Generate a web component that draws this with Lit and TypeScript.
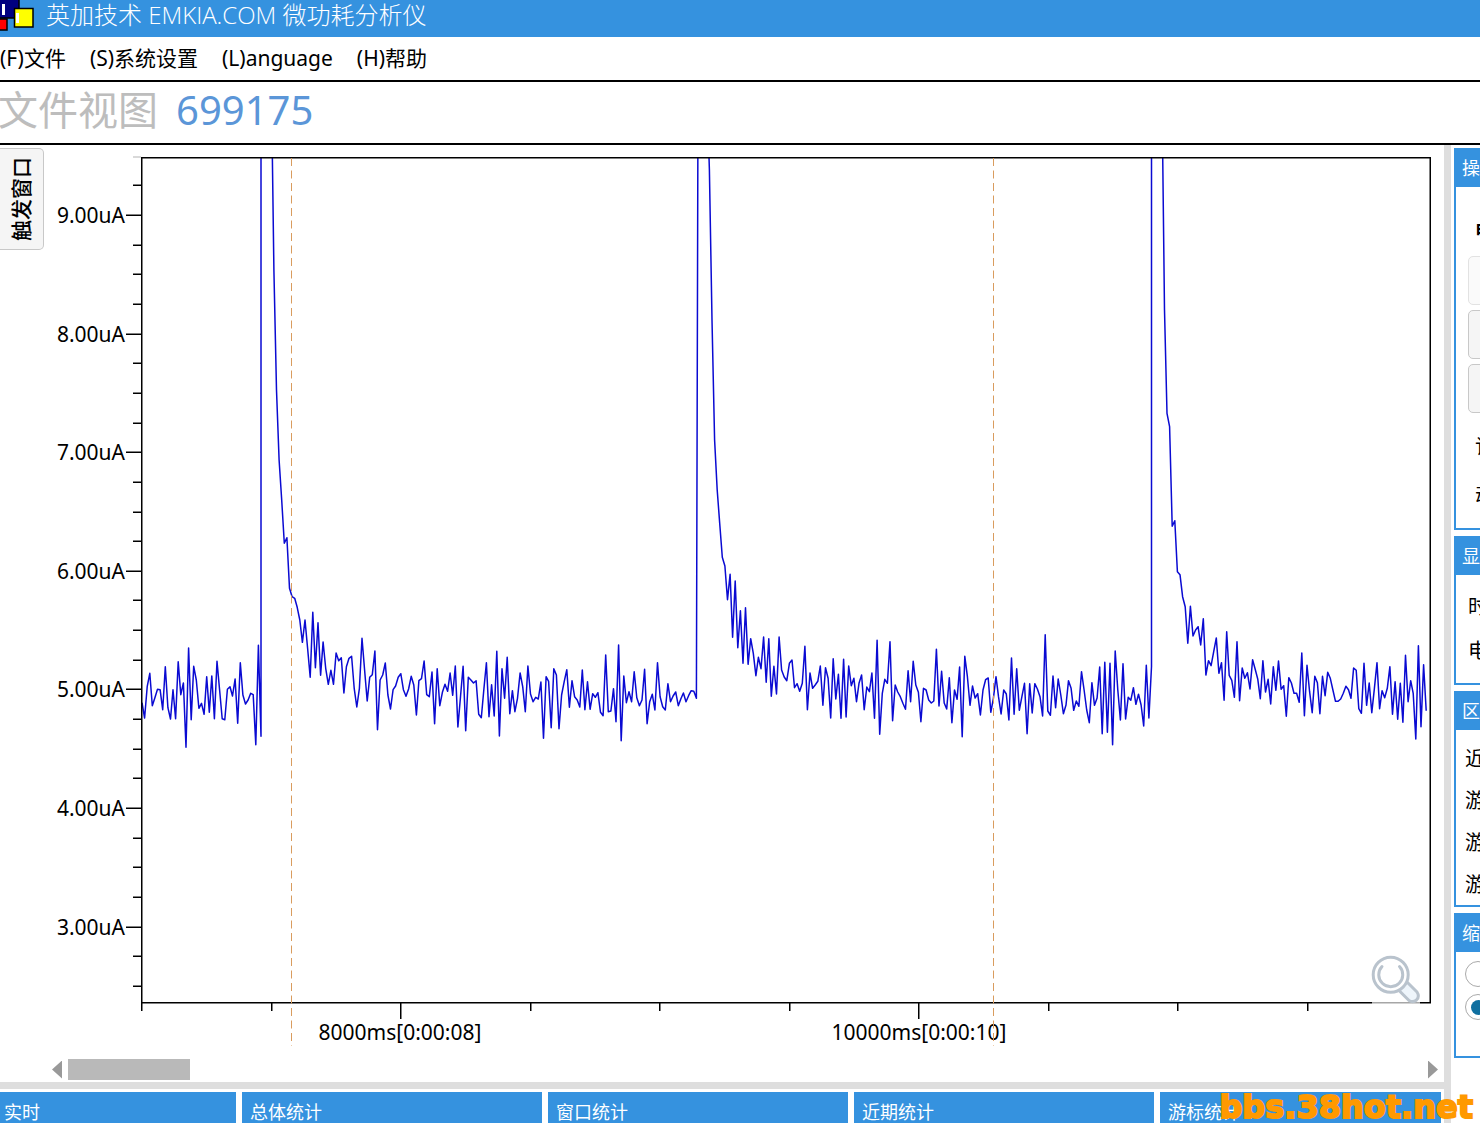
import { LitElement, html, svg, css } from "lit";
import { customElement } from "lit/decorators.js";

interface Trace {
  from: number;
  to: number;
  counts: number[];
}

/* Sampled current. One microampere is 356 counts, counted downwards from 6.43 uA. */
const traces: Trace[] = [
  {
    from: 142,
    to: 261,
    counts: [
      548, 594, 500, 460, 557, 533, 508, 509, 569, 440, 563, 597, 509, 596, 425, 524, 489, 682, 384, 599, 439, 480,
      565, 550, 583, 470, 577, 468, 596, 424, 510, 596, 599, 508, 500, 528, 477, 610, 428, 525, 552, 540, 520, 524,
      674, 376, 649,
    ],
  },
  {
    from: 261,
    to: 429.3,
    counts: [
      -1300, -1300, -1300, -1300, -1300, -750, -390, -180, -60, 70, 53, 205, 230, 235, 262, 300, 367, 300, 385, 472,
      277, 443, 308, 466, 366, 445, 493, 451, 493, 399, 422, 413, 519, 440, 415, 409, 505, 561, 505, 355, 450, 543,
      472, 464, 393, 629, 480, 465, 429, 525, 567, 509, 498, 472, 461, 509, 529, 507, 469, 495, 585, 482, 476, 423,
      524, 530,
    ],
  },
  {
    from: 432,
    to: 696.4,
    counts: [
      456, 611, 446, 557, 517, 493, 514, 459, 526, 438, 621, 530, 439, 632, 472, 480, 489, 482, 583, 593, 510, 428,
      590, 494, 588, 394, 648, 446, 535, 412, 581, 512, 575, 535, 459, 500, 575, 438, 522, 545, 532, 537, 486, 655,
      470, 484, 623, 446, 465, 626, 525, 485, 449, 562, 482, 530, 540, 561, 450, 569, 485, 568, 521, 532, 518, 577,
      587, 405, 575, 573, 506, 605, 375, 662, 468, 548, 515, 545, 455, 533, 557, 540, 448, 611, 545, 523, 570, 428,
      530, 560, 570, 491, 545, 528, 516, 557, 537, 519, 545, 527, 512, 514, 535,
    ],
  },
  {
    from: 699.1,
    to: 977.7,
    counts: [
      -2500, -2500, -2500, -1300, -1050, -600, -240, -90, 10, 112, 138, 239, 163, 352, 183, 383, 272, 430, 263, 433,
      356, 400, 467, 412, 446, 351, 487, 356, 529, 439, 522, 351, 450, 471, 482, 430, 420, 503, 491, 514, 490, 379,
      569, 459, 505, 495, 484, 438, 556, 443, 475, 594, 416, 537, 463, 595, 418, 591, 438, 497, 475, 545, 490, 465,
      569, 501, 515, 459, 595, 361, 643, 520, 478, 490, 365, 602, 495, 516, 530, 550, 568, 452, 545, 424, 495, 517,
      605, 505, 510, 540, 549, 543, 388, 558, 454, 549, 567, 473, 608, 510, 538, 441, 650, 409, 470, 556, 498, 534,
      521,
    ],
  },
  {
    from: 980.4,
    to: 1151.5,
    counts: [
      585, 510, 479, 474, 577, 535, 470, 530, 582, 510, 522, 600, 414, 583, 446, 571, 530, 490, 641, 491, 579, 491,
      507, 530, 588, 344, 573, 586, 468, 563, 477, 525, 581, 555, 482, 505, 571, 543, 559, 455, 510, 570, 608, 488,
      556, 534, 441, 641, 427, 637, 430, 674, 393, 510, 600, 431, 597, 532, 541, 503, 553, 523, 555, 618, 436, 594,
      440,
    ],
  },
  {
    from: 1151.5,
    to: 1426.2,
    counts: [
      -1300, -1300, -1300, -1300, -1300, -630, -320, -280, 19, 2, 155, 164, 230, 260, 370, 259, 348, 330, 320, 375,
      296, 465, 422, 437, 395, 354, 460, 428, 541, 335, 466, 481, 532, 365, 542, 444, 475, 458, 507, 419, 448, 478,
      536, 422, 516, 478, 552, 440, 511, 423, 508, 497, 589, 473, 489, 520, 520, 547, 399, 587, 436, 515, 578, 469,
      488, 581, 469, 527, 457, 475, 510, 544, 544, 537, 520, 499, 509, 535, 444, 451, 566, 580, 430, 556, 489, 578,
      505, 428, 566, 512, 533, 505, 440, 583, 485, 598, 490, 607, 406, 545, 482, 520, 657, 377, 620, 434, 572,
    ],
  },
];

const points = traces
  .flatMap(({ from, to, counts }) =>
    counts.map((c, i) => {
      const x = from + ((to - from) * i) / (counts.length - 1);
      return `${x.toFixed(1)},${(520 + c / 3).toFixed(1)}`;
    })
  )
  .join(" ");

const yTicks = Array.from({ length: 28 }, (_, i) => i - 1).map((i) => ({
  y: Math.round(215 + i * 29.65) + 0.25,
  major: i >= 0 && i % 4 === 0,
  label: `${9 - i / 4}.00uA`,
}));

const xTicks = Array.from({ length: 10 }, (_, i) => ({
  x: Math.round(142 + i * 129.5) - 0.25,
  major: i === 2 || i === 6,
}));

@customElement("current-chart")
export class CurrentChart extends LitElement {
  static styles = css`
    :host {
      display: block;
      flex: 1;
      min-width: 0;
    }
    .plot {
      display: block;
      width: 100%;
      height: auto;
    }
    .axis {
      fill: none;
      stroke: #000;
      stroke-width: 1.5;
    }
    .soft {
      stroke: #ccc;
    }
    .tick {
      font: 21px "Noto Sans", "Noto Sans CJK SC", sans-serif;
      fill: #000;
    }
    .cursor {
      stroke: #d99c5e;
      stroke-width: 1;
      stroke-dasharray: 8 4.5;
    }
    .trace {
      fill: none;
      stroke: #0a0ad2;
      stroke-width: 1.5;
      stroke-linejoin: round;
    }
  `;

  render() {
    return html`
      <svg class="plot" viewBox="45 145 1399 908" role="img" aria-label="uA / ms">
        <defs>
          <clipPath id="area"><rect x="142" y="158" width="1288" height="844"></rect></clipPath>
        </defs>
        <line class="axis soft" x1="133" x2="141" y1="157" y2="157"></line>
        ${yTicks.map(
          (t) => svg`
            <line class="axis" x1=${t.major ? 126 : 133} x2="142" y1=${t.y} y2=${t.y}></line>
            ${t.major ? svg`<text class="tick" x="125" y=${t.y + 7.75} text-anchor="end">${t.label}</text>` : ""}`
        )}
        ${xTicks.map(
          (t) => svg`<line class="axis" x1=${t.x} x2=${t.x} y1="1003" y2=${t.major ? 1019 : 1011}></line>`
        )}
        <text class="tick" x="400" y="1040" text-anchor="middle">8000ms[0:00:08]</text>
        <text class="tick" x="919" y="1040" text-anchor="middle">10000ms[0:00:10]</text>
        <polyline class="trace" points=${points} clip-path="url(#area)"></polyline>
        <rect class="axis" x="141.750" y="157.750" width="1288.500" height="845"></rect>
        <line class="cursor" x1="291.5" x2="291.5" y1="158" y2="1046"></line>
        <line class="cursor" x1="993.5" x2="993.5" y1="158" y2="1046"></line>
        <rect x="1372" y="956" width="48" height="48" fill="#fff" opacity="0.65"></rect>
        <g fill="none" stroke="#b9c3cd" stroke-width="3" stroke-linecap="round" stroke-linejoin="round">
          <path d="M1400 991.500 L1409 1000.500 Q1413 1003 1416.500 1000 Q1420 996.500 1417 992 L1407.500 982.500" fill="#eef5fb"></path>
          <circle cx="1390.700" cy="974.700" r="17.500" fill="#fff"></circle>
          <path d="M1382 966.500 A12 12 0 1 0 1399.500 966.500"></path>
        </g>
      </svg>
    `;
  }
}

@customElement("app-root")
export class AppRoot extends LitElement {
  static styles = css`
    :host {
      display: flex;
      flex-direction: column;
      height: 100vh;
      overflow: hidden;
      position: relative;
      background: #fff;
      color: #000;
      font: 21px "Noto Sans", "Noto Sans CJK SC", sans-serif;
    }
    * {
      box-sizing: border-box;
    }
    .titlebar {
      flex: none;
      display: flex;
      align-items: flex-start;
      gap: 12px;
      height: 37px;
      background: #3592df;
      color: #fff;
    }
    .titlebar h1 {
      margin: 0;
      font: 300 24px/30px "Open Sans", "Noto Sans CJK SC", sans-serif;
    }
    .logo {
      width: 34px;
      height: 31px;
    }
    .menu {
      flex: none;
      display: flex;
      gap: 24px;
      height: 45px;
      border-bottom: 2px solid #000;
    }
    .menu button {
      padding: 0;
      border: 0;
      background: none;
      font: inherit;
      color: inherit;
      line-height: 43px;
    }
    .view {
      flex: none;
      display: flex;
      gap: 18px;
      height: 63px;
      margin: 0;
      border-bottom: 2px solid #000;
      font-size: 40px;
      font-weight: 400;
      line-height: 56px;
      color: #bdbdbd;
    }
    .view span {
      margin-left: -2px;
    }
    .view output {
      color: #5b96d8;
    }
    .body {
      flex: 1;
      min-height: 0;
      display: grid;
      grid-template-columns: minmax(0, 1fr) 7px 29px;
    }
    .main {
      display: flex;
      flex-direction: column;
      min-width: 0;
      min-height: 0;
    }
    .work {
      flex: none;
      display: flex;
      align-items: flex-start;
      gap: 1px;
    }
    .tab {
      flex: none;
      width: 44px;
      height: 102px;
      margin-top: 3px;
      padding: 0 4px 0 0;
      border: 1px solid #c8c8c8;
      border-left: 0;
      border-radius: 0 5px 5px 0;
      background: #f5f5f5;
      color: #000;
      font: 500 21px/24px "Noto Sans CJK SC", sans-serif;
      display: flex;
      align-items: center;
      justify-content: center;
    }
    .tab span {
      writing-mode: vertical-rl;
      text-orientation: sideways;
      transform: rotate(180deg);
    }
    .scroll {
      flex: none;
      display: flex;
      align-items: center;
      gap: 6px;
      height: 29px;
      padding: 4px 6px 0 52px;
    }
    .scroll button {
      padding: 0;
      border: 0;
      width: 10px;
      height: 18px;
      background: #999;
    }
    .prev {
      clip-path: polygon(100% 0, 100% 100%, 0 50%);
    }
    .next {
      clip-path: polygon(0 0, 100% 50%, 0 100%);
    }
    .track {
      flex: 1;
    }
    .thumb {
      width: 9%;
      height: 21px;
      background: #b9b9b9;
    }
    .rule {
      flex: none;
      height: 7px;
      background: #dedede;
    }
    .stats {
      flex: 1;
      display: grid;
      grid-template-columns: 236fr 300fr 300fr 300fr 281fr;
      gap: 6px;
      padding: 3px 3px 0 0;
    }
    .stats h2 {
      margin: 0;
      padding: 0 8px;
      background: #3592df;
      color: #fff;
      font: 18px/38px "Noto Sans CJK SC", sans-serif;
      overflow: hidden;
    }
    .stats h2:first-child {
      padding: 0 4px;
    }
    .divider {
      background: #dedede;
    }
    .side {
      display: flex;
      flex-direction: column;
      gap: 6px;
      padding: 3px 0 0 3px;
      min-width: 0;
      overflow: hidden;
    }
    .panel {
      border: 2px solid #3592df;
      border-right: 0;
      overflow: hidden;
      flex: none;
    }
    .panel h2 {
      margin: 0;
      padding-left: 6px;
      height: 37px;
      background: #3592df;
      color: #fff;
      font: 18px/34px "Noto Sans CJK SC", sans-serif;
    }
    .rows {
      display: flex;
      flex-direction: column;
      padding: 12px 0 0 9px;
      font: 20px/44px "Noto Sans CJK SC", sans-serif;
    }
    .ops {
      padding: 20px 0 11px 12px;
      gap: 5px;
    }
    .ops b {
      padding-left: 7px;
      font-size: 18px;
    }
    .ops .labels {
      display: flex;
      flex-direction: column;
      gap: 5px;
      padding: 6px 0 0 7px;
    }
    .ops button {
      width: 90px;
      height: 49px;
      border: 1px solid #c8c8c8;
      border-radius: 5px;
      background: #f5f5f5;
    }
    .ops button:disabled {
      border-color: #e2e2e2;
      background: #fafafa;
    }
    .show {
      padding: 9px 0 11px 12px;
    }
    .range {
      padding: 7px 0 0 9px;
      line-height: 42px;
    }
    .zoomset {
      gap: 7px;
      padding: 9px 0 36px 9px;
    }
    .zoomset input {
      appearance: none;
      width: 26px;
      height: 26px;
      margin: 0;
      border: 1px solid #aaa;
      border-radius: 50%;
      background: #fff;
      display: grid;
      place-items: center;
    }
    .zoomset input:checked::before {
      content: "";
      width: 15px;
      height: 15px;
      border-radius: 50%;
      background: #0f6fa0;
    }
    .mark {
      position: absolute;
      right: 7px;
      bottom: 0;
      color: #ff9900;
      font: 700 32px/32px "DejaVu Sans", sans-serif;
      -webkit-text-stroke: 2px #ff9900;
    }
  `;

  render() {
    return html`
      <header class="titlebar">
        <svg class="logo" viewBox="0 0 34 31" aria-hidden="true">
          <rect x="-6" y="19" width="13" height="11" fill="#f00" stroke="#000" stroke-width="1.500"></rect>
          <rect x="-3" y="-3" width="22" height="21" fill="#000080" stroke="#000" stroke-width="1.500"></rect>
          <rect x="2" y="4" width="3" height="11" fill="#fff"></rect>
          <rect x="14.500" y="8.500" width="18.500" height="18.500" fill="#ff0" stroke="#000" stroke-width="1.500"></rect>
          <rect x="16" y="13" width="3" height="10" fill="#fff"></rect>
        </svg>
        <h1>英加技术 EMKIA.COM 微功耗分析仪</h1>
      </header>
      <nav class="menu">
        <button>(F)文件</button>
        <button>(S)系统设置</button>
        <button>(L)anguage</button>
        <button>(H)帮助</button>
      </nav>
      <h2 class="view"><span>文件视图</span><output>699175</output></h2>
      <div class="body">
        <main class="main">
          <div class="work">
            <button class="tab"><span>触发窗口</span></button>
            <current-chart></current-chart>
          </div>
          <div class="scroll">
            <button class="prev" aria-label="◀"></button>
            <div class="track"><div class="thumb"></div></div>
            <button class="next" aria-label="▶"></button>
          </div>
          <div class="rule"></div>
          <div class="stats">
            ${["实时", "总体统计", "窗口统计", "近期统计", "游标统计"].map((t) => html`<h2>${t}</h2>`)}
          </div>
        </main>
        <div class="divider"></div>
        <aside class="side">
          <section class="panel">
            <h2>操</h2>
            <div class="rows ops">
              <b>电</b>
              <button disabled aria-label="1"></button>
              <button aria-label="2"></button>
              <button aria-label="3"></button>
              <div class="labels"><span>记</span><span>动</span></div>
            </div>
          </section>
          <section class="panel">
            <h2>显</h2>
            <div class="rows show"><span>时</span><span>电</span></div>
          </section>
          <section class="panel">
            <h2>区</h2>
            <div class="rows range"><span>近</span><span>游</span><span>游</span><span>游</span></div>
          </section>
          <section class="panel">
            <h2 id="zoom">缩</h2>
            <div class="rows zoomset" role="radiogroup" aria-labelledby="zoom">
              <input type="radio" name="zoom" aria-label="1" />
              <input type="radio" name="zoom" aria-label="2" checked />
            </div>
          </section>
        </aside>
      </div>
      <div class="mark">bbs.38hot.net</div>
    `;
  }
}
